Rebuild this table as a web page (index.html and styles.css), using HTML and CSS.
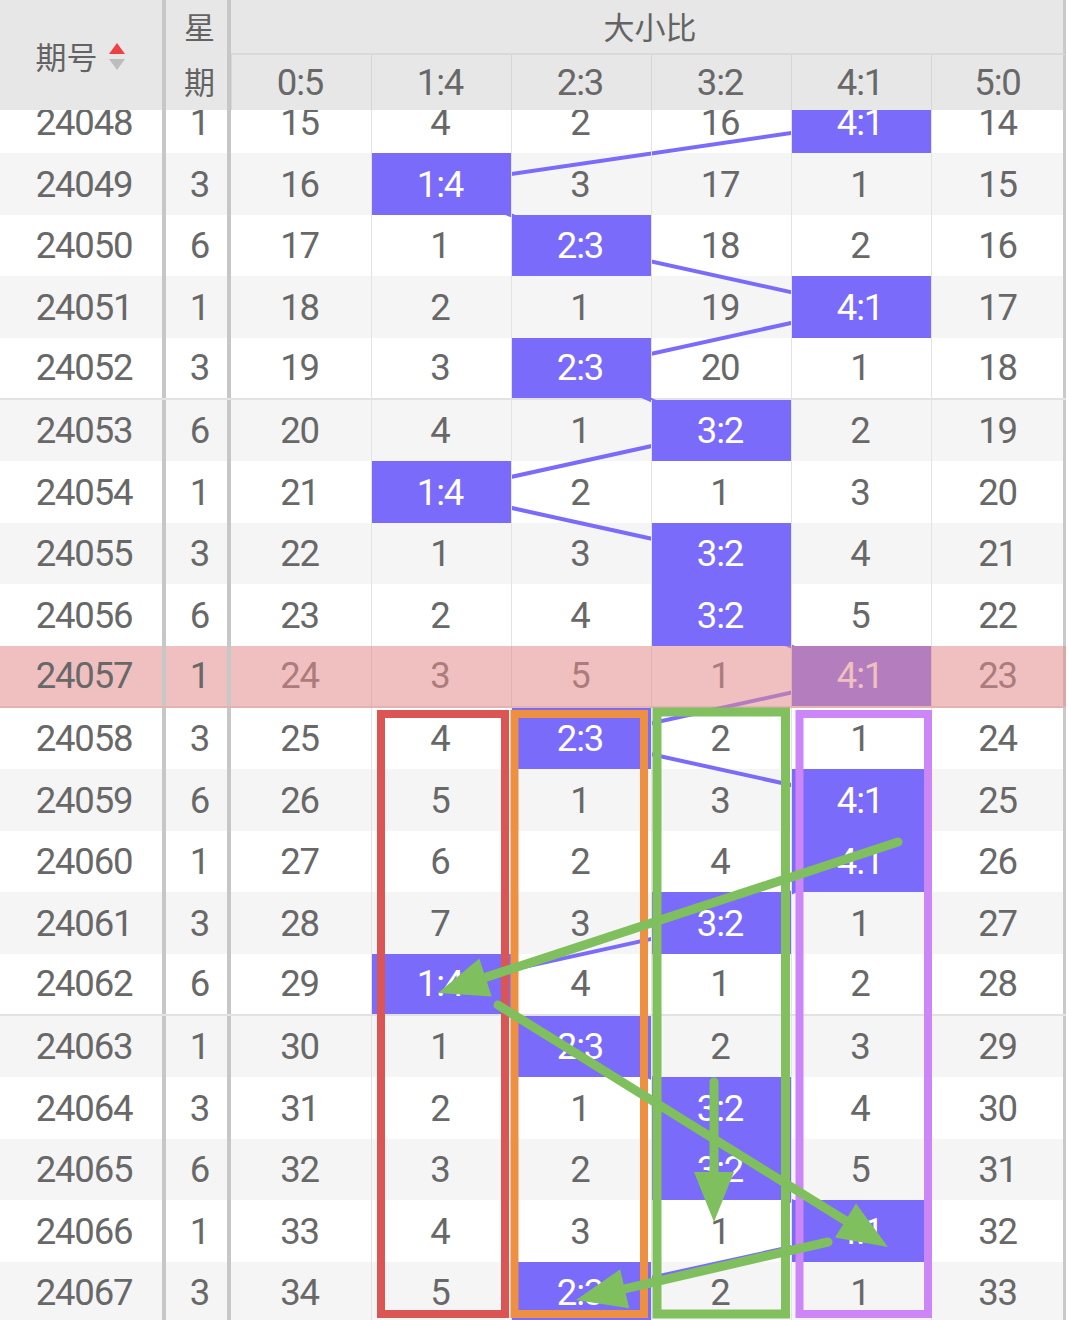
FILE: index.html
```html
<!DOCTYPE html>
<html lang="zh">
<head>
<meta charset="utf-8">
<title>大小比走势</title>
<link rel="stylesheet" href="styles.css">
</head>
<body>
<div class="page">
  <div class="thead">
    <div class="h-qh"><span class="h-txt">期号</span><span class="sort"><i class="up"></i><i class="down"></i></span></div>
    <div class="h-xq"><span>星</span><span>期</span></div>
    <div class="h-title">大小比</div>
    <div class="h-lab">0:5</div>
    <div class="h-lab">1:4</div>
    <div class="h-lab">2:3</div>
    <div class="h-lab">3:2</div>
    <div class="h-lab">4:1</div>
    <div class="h-lab last">5:0</div>
  </div>
  <div class="tbody-clip">
    <div class="tbody">
      <svg class="links" width="1066" height="1232" viewBox="0 0 1066 1232">
        <polyline points="861,30.8 441,92.4 581,154 861,215.6 581,277.2 721,338.8 441,400.4 721,462 721,523.6 861,585.2 581,646.8 861,708.4 861,770 721,831.6 441,893.2 581,954.8 721,1016.4 721,1078 861,1139.6 581,1201.2" fill="none" stroke="#7b6bfa" stroke-width="4" stroke-linejoin="round"/>
      </svg>
      <div class="row"><div class="c qh">24048</div><div class="c xq">1</div><div class="c">15</div><div class="c">4</div><div class="c">2</div><div class="c">16</div><div class="c on">4:1</div><div class="c">14</div></div>
      <div class="row alt"><div class="c qh">24049</div><div class="c xq">3</div><div class="c">16</div><div class="c on">1:4</div><div class="c">3</div><div class="c">17</div><div class="c">1</div><div class="c">15</div></div>
      <div class="row"><div class="c qh">24050</div><div class="c xq">6</div><div class="c">17</div><div class="c">1</div><div class="c on">2:3</div><div class="c">18</div><div class="c">2</div><div class="c">16</div></div>
      <div class="row alt"><div class="c qh">24051</div><div class="c xq">1</div><div class="c">18</div><div class="c">2</div><div class="c">1</div><div class="c">19</div><div class="c on">4:1</div><div class="c">17</div></div>
      <div class="row sep"><div class="c qh">24052</div><div class="c xq">3</div><div class="c">19</div><div class="c">3</div><div class="c on">2:3</div><div class="c">20</div><div class="c">1</div><div class="c">18</div></div>
      <div class="row alt"><div class="c qh">24053</div><div class="c xq">6</div><div class="c">20</div><div class="c">4</div><div class="c">1</div><div class="c on">3:2</div><div class="c">2</div><div class="c">19</div></div>
      <div class="row"><div class="c qh">24054</div><div class="c xq">1</div><div class="c">21</div><div class="c on">1:4</div><div class="c">2</div><div class="c">1</div><div class="c">3</div><div class="c">20</div></div>
      <div class="row alt"><div class="c qh">24055</div><div class="c xq">3</div><div class="c">22</div><div class="c">1</div><div class="c">3</div><div class="c on">3:2</div><div class="c">4</div><div class="c">21</div></div>
      <div class="row"><div class="c qh">24056</div><div class="c xq">6</div><div class="c">23</div><div class="c">2</div><div class="c">4</div><div class="c on">3:2</div><div class="c">5</div><div class="c">22</div></div>
      <div class="row sep hot"><div class="c qh">24057</div><div class="c xq">1</div><div class="c">24</div><div class="c">3</div><div class="c">5</div><div class="c">1</div><div class="c on">4:1</div><div class="c">23</div></div>
      <div class="row"><div class="c qh">24058</div><div class="c xq">3</div><div class="c">25</div><div class="c">4</div><div class="c on">2:3</div><div class="c">2</div><div class="c">1</div><div class="c">24</div></div>
      <div class="row alt"><div class="c qh">24059</div><div class="c xq">6</div><div class="c">26</div><div class="c">5</div><div class="c">1</div><div class="c">3</div><div class="c on">4:1</div><div class="c">25</div></div>
      <div class="row"><div class="c qh">24060</div><div class="c xq">1</div><div class="c">27</div><div class="c">6</div><div class="c">2</div><div class="c">4</div><div class="c on">4:1</div><div class="c">26</div></div>
      <div class="row alt"><div class="c qh">24061</div><div class="c xq">3</div><div class="c">28</div><div class="c">7</div><div class="c">3</div><div class="c on">3:2</div><div class="c">1</div><div class="c">27</div></div>
      <div class="row sep"><div class="c qh">24062</div><div class="c xq">6</div><div class="c">29</div><div class="c on">1:4</div><div class="c">4</div><div class="c">1</div><div class="c">2</div><div class="c">28</div></div>
      <div class="row alt"><div class="c qh">24063</div><div class="c xq">1</div><div class="c">30</div><div class="c">1</div><div class="c on">2:3</div><div class="c">2</div><div class="c">3</div><div class="c">29</div></div>
      <div class="row"><div class="c qh">24064</div><div class="c xq">3</div><div class="c">31</div><div class="c">2</div><div class="c">1</div><div class="c on">3:2</div><div class="c">4</div><div class="c">30</div></div>
      <div class="row alt"><div class="c qh">24065</div><div class="c xq">6</div><div class="c">32</div><div class="c">3</div><div class="c">2</div><div class="c on">3:2</div><div class="c">5</div><div class="c">31</div></div>
      <div class="row"><div class="c qh">24066</div><div class="c xq">1</div><div class="c">33</div><div class="c">4</div><div class="c">3</div><div class="c">1</div><div class="c on">4:1</div><div class="c">32</div></div>
      <div class="row alt"><div class="c qh">24067</div><div class="c xq">3</div><div class="c">34</div><div class="c">5</div><div class="c on">2:3</div><div class="c">2</div><div class="c">1</div><div class="c">33</div></div>
    </div>
  </div>
  <svg class="marks" width="1068" height="1320" viewBox="0 0 1068 1320">
    <rect x="381" y="714" width="124" height="600" fill="none" stroke="#db5555" stroke-width="8"/>
    <rect x="514.5" y="714" width="129.5" height="600" fill="none" stroke="#ee8f42" stroke-width="8"/>
    <rect x="657" y="712" width="128.5" height="602" fill="none" stroke="#82bf5f" stroke-width="9"/>
    <rect x="799.5" y="714" width="128.5" height="600" fill="none" stroke="#cc86f7" stroke-width="8"/>
    <g stroke="#80bf5e" stroke-width="9" stroke-linecap="round" fill="#80bf5e">
      <line x1="898" y1="842" x2="485.5" y2="977.4"/>
      <line x1="498" y1="1005" x2="845.5" y2="1220.6"/>
      <line x1="714" y1="1082" x2="714" y2="1172"/>
      <line x1="828" y1="1242" x2="624.7" y2="1288.8"/>
    </g>
    <g fill="#80bf5e">
      <polygon points="438,993 479.3,958.4 491.7,996.4"/>
      <polygon points="888,1247 835,1237.6 856,1203.6"/>
      <polygon points="714,1222 694,1172 734,1172"/>
      <polygon points="576,1300 629.2,1308.3 620.2,1269.3"/>
    </g>
  </svg>
</div>
</body>
</html>
```
FILE: styles.css
```css
html, body {
  margin: 0;
  padding: 0;
  background: #ffffff;
}

body {
  font-family: Roboto, "Noto Sans CJK SC", sans-serif;
  color: #666666;
}

.page {
  position: relative;
  width: 1068px;
  height: 1320px;
  overflow: hidden;
}

/* ---------- header ---------- */
.thead {
  display: grid;
  grid-template-columns: 166px 65px repeat(5, 140px) 135px;
  grid-template-rows: 55px 55px;
  width: 1066px;
  background: #e7e7e7;
}

.h-qh {
  grid-row: 1 / 3;
  grid-column: 1;
  border-right: 4px solid #c7c7c7;
  display: flex;
  align-items: center;
  justify-content: center;
  gap: 11px;
  padding-right: 2px;
}

.h-txt {
  font-family: "Noto Sans CJK SC", sans-serif;
  font-size: 31px;
  color: #636363;
  line-height: 1;
}

.sort {
  display: flex;
  flex-direction: column;
  align-items: center;
  gap: 5px;
  margin-top: 2px;
}

.sort i {
  display: block;
  width: 0;
  height: 0;
  border-left: 8px solid transparent;
  border-right: 8px solid transparent;
}

.sort .up {
  border-bottom: 11px solid #ee4242;
}

.sort .down {
  border-top: 11px solid #bdbdbd;
}

.h-xq {
  grid-row: 1 / 3;
  grid-column: 2;
  border-right: 4px solid #c7c7c7;
  display: flex;
  flex-direction: column;
  align-items: center;
  padding-left: 6px;
  font-family: "Noto Sans CJK SC", sans-serif;
  font-size: 31px;
  color: #636363;
}

.h-xq span {
  line-height: 52px;
  height: 55px;
}

.h-title {
  grid-row: 1;
  grid-column: 3 / 9;
  border-bottom: 2px solid #d9d9d9;
  border-right: 3px solid #c9c9c9;
  display: flex;
  align-items: center;
  justify-content: center;
  font-family: "Noto Sans CJK SC", sans-serif;
  font-size: 31px;
  color: #636363;
  padding-left: 6px;
  padding-bottom: 3px;
}

.h-lab {
  grid-row: 2;
  display: flex;
  align-items: center;
  justify-content: center;
  font-size: 36.5px;
  letter-spacing: -1.2px;
  color: #686868;
  border-left: 1px solid #d6d6d6;
  padding-right: 3px;
}

.h-lab:first-of-type {
  border-left: none;
}

.h-lab.last {
  border-right: 3px solid #c9c9c9;
  padding-right: 0;
}

/* ---------- body ---------- */
.tbody-clip {
  width: 1066px;
  height: 1210px;
  overflow: hidden;
}

.tbody {
  position: relative;
  margin-top: -18.3px;
}

.links {
  position: absolute;
  left: 0;
  top: 0;
  z-index: 1;
}

.row {
  display: grid;
  grid-template-columns: 166px 65px repeat(5, 140px) 135px;
  height: 61.6px;
  box-sizing: border-box;
  background: #ffffff;
}

.row.alt {
  background: #f5f5f5;
}

.row.sep {
  border-bottom: 2px solid #e2e2e2;
}

.c {
  position: relative;
  z-index: 2;
  display: flex;
  align-items: center;
  justify-content: center;
  font-size: 36.5px;
  letter-spacing: -1.2px;
  color: #686868;
  box-sizing: border-box;
  padding-right: 3px;
}

.c.qh {
  border-right: 4px solid #c7c7c7;
  padding-right: 0;
  padding-left: 6px;
}

.c.xq {
  border-right: 4px solid #c7c7c7;
  padding-right: 0;
  padding-left: 6px;
}

.c:nth-child(n+4) {
  border-left: 1px solid #e3e3e3;
}

.c:last-child {
  border-right: 3px solid #c9c9c9;
  padding-right: 0;
}

.c.on {
  background: #7b6bfa;
  color: #ffffff;
}

/* highlighted (current) row */
.row.hot {
  position: relative;
}

.row.hot::after {
  content: "";
  position: absolute;
  left: 0;
  right: 0;
  top: 0;
  bottom: -2px;
  background: rgba(227, 140, 140, 0.55);
  z-index: 3;
}

.row.hot .qh,
.row.hot .xq {
  z-index: 4;
}

/* ---------- annotations ---------- */
.marks {
  position: absolute;
  left: 0;
  top: 0;
  z-index: 10;
}
```
